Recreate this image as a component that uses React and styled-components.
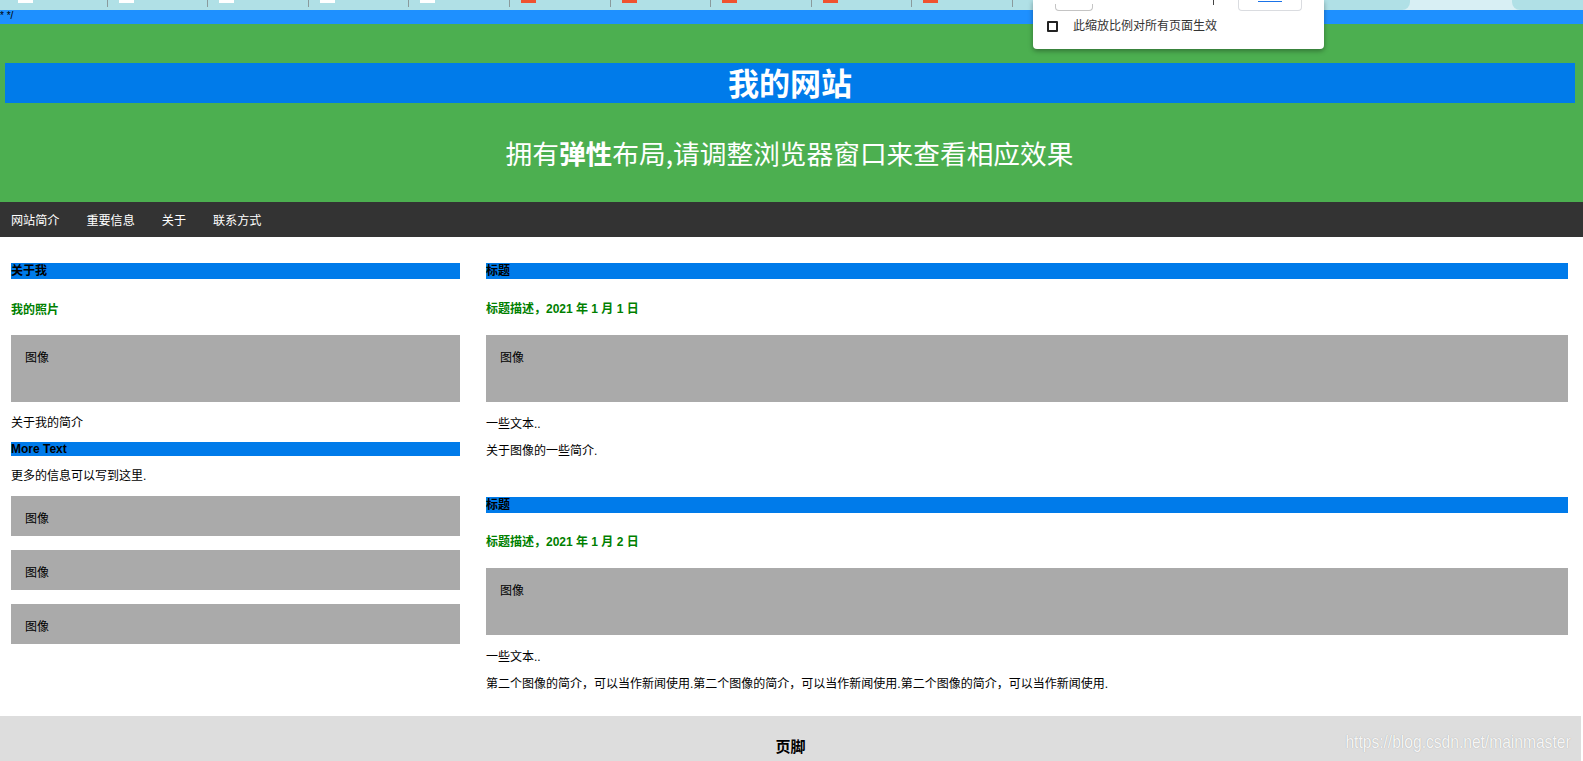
import React from "react"
import styled, { createGlobalStyle } from "styled-components"

const GlobalStyle = createGlobalStyle`
  html, body {
    margin: 0;
    padding: 0;
    overflow: hidden;
    background: #fff;
  }
  body {
    font-family: "Liberation Sans", "Noto Sans CJK SC", sans-serif;
    color: #000;
  }
  * {
    box-sizing: border-box;
  }
`

const Page = styled.div`
  position: relative;
  width: 100%;
`

/* browser chrome leftovers at the top */
const TabStrip = styled.div`
  display: flex;
  height: 10px;
  background: #d8eff4;
  overflow: hidden;
`

const TabGroup = styled.div`
  display: flex;
  flex: 0 0 1410px;
  padding-left: 7px;
  background: #b0e0e6;
  border-bottom-right-radius: 8px;
`

const TabGap = styled.div`
  flex: 0 0 102px;
`

const TabTail = styled.div`
  flex: 1;
  background: #b0e0e6;
  border-bottom-left-radius: 8px;
`

const Tab = styled.div`
  flex: 0 0 100.6px;
  border-right: 1px solid #8a9a9c;
  height: 7px;
`

const Favicon = styled.span`
  display: block;
  margin-left: 11px;
  width: 15px;
  height: 3px;
  background: ${p => (p.$red ? "#ef5230" : "#fff")};
`

const CommentStrip = styled.div`
  height: 14px;
  background: #1e90ff;
  font-size: 10px;
  line-height: 12px;
  color: #000;
`

const Header = styled.header`
  background: #4caf50;
  padding: 39px 0 33px;
  text-align: center;
  color: #fff;
`

const SiteTitle = styled.h1`
  margin: 0 8px 0 5px;
  height: 40px;
  line-height: 38px;
  background: #007bea;
  font-family: "Noto Sans CJK SC", sans-serif;
  font-size: 31px;
  font-weight: 700;
`

const Tagline = styled.p`
  margin: 34px 0 0;
  padding-right: 4px;
  font-size: 26.7px;
  line-height: 32px;
  font-family: "Noto Sans CJK SC", sans-serif;
  font-weight: 400;

  b {
    font-weight: 700;
  }
`

const NavBar = styled.nav`
  display: flex;
  height: 35px;
  background: #333;
`

const NavLink = styled.a`
  padding: 4px 14.5px 0 12.5px;
  color: #fff;
  font-size: 12.1px;
  line-height: 31px;
  text-decoration: none;
  &:first-child {
    padding-left: 11px;
  }
`

const Row = styled.div`
  display: grid;
  grid-template-columns: 472px 1fr;
`

const Column = styled.div`
  display: flex;
  flex-direction: column;
  padding: 12px ${p => (p.$main ? "15px" : "12px")} 25px ${p => (p.$main ? "14px" : "11px")};
`

const BlockTitle = styled.h2`
  margin: ${p => p.$mt}px 0 0;
  height: ${p => p.$h || 16}px;
  line-height: ${p => p.$h || 16}px;
  background: #007bea;
  font-size: 12px;
  font-weight: 700;
  color: #000;
`

const SubTitle = styled.h5`
  margin: ${p => p.$mt}px 0 0;
  padding-top: 2px;
  font-size: 12px;
  line-height: 14px;
  font-weight: 700;
  color: #008000;
`

const FakeImg = styled.div`
  margin-top: ${p => p.$mt}px;
  height: ${p => p.$h}px;
  padding: 16px 14px 12px;
  background: #aaa;
  font-size: 12px;
  line-height: 14px;
`

const Text = styled.p`
  margin: ${p => p.$mt}px 0 0;
  padding-top: 1px;
  font-size: 12px;
  line-height: 14px;
`

const Footer = styled.footer`
  position: relative;
  height: 60px;
  margin-right: 2px;
  padding-top: 22px;
  background: #ddd;
  text-align: center;
  font-size: 15px;
  line-height: 18px;
  font-weight: 700;
`

const Watermark = styled.span`
  position: absolute;
  right: 10px;
  top: 15px;
  font-size: 19px;
  line-height: 22px;
  font-weight: 400;
  color: rgba(255, 255, 255, 0.92);
  text-shadow: 0 0 1px rgba(0, 0, 0, 0.3);
  transform: scaleX(0.82);
  transform-origin: right center;
  white-space: nowrap;
`

/* zoom popup from the browser, lying over the page */
const ZoomPopup = styled.div`
  position: absolute;
  top: 0;
  left: 1033px;
  width: 291px;
  height: 49px;
  background: #fff;
  border-radius: 0 0 4px 4px;
  box-shadow: 0 2px 5px rgba(0, 0, 0, 0.35);
  overflow: hidden;
`

const PopupTop = styled.div`
  display: flex;
  align-items: flex-end;
  height: 11px;
`

const ZoomField = styled.div`
  margin-left: 22px;
  width: 38px;
  height: 7px;
  border: 1px solid #c4c4c4;
  border-top: none;
  border-radius: 0 0 4px 4px;
`

const PlusStem = styled.div`
  margin-left: 120px;
  margin-bottom: 6px;
  width: 1px;
  height: 5px;
  background: #444;
`

const ResetButton = styled.div`
  margin-left: 24px;
  width: 64px;
  height: 11px;
  border: 1px solid #dadce0;
  border-top: none;
  border-radius: 0 0 4px 4px;
  display: flex;
  justify-content: center;

  span {
    margin-top: 1px;
    width: 24px;
    height: 1px;
    background: #1a73e8;
  }
`

const CheckRow = styled.label`
  display: flex;
  align-items: center;
  margin: 8px 0 0 14px;
  font-size: 12px;
  line-height: 14px;
  color: #333;
`

const CheckBox = styled.span`
  width: 11px;
  height: 11px;
  border: 2px solid #222;
  border-radius: 1px;
  margin-right: 15px;
`

const tabs = [false, false, false, false, false, true, true, true, true, true]

export default function App() {
  return (
    <Page>
      <GlobalStyle />
      <TabStrip>
        <TabGroup>
          {tabs.map((red, i) => (
            <Tab key={i}>
              <Favicon $red={red} />
            </Tab>
          ))}
        </TabGroup>
        <TabGap />
        <TabTail />
      </TabStrip>
      <CommentStrip>* */</CommentStrip>

      <Header>
        <SiteTitle>我的网站</SiteTitle>
        <Tagline>
          拥有<b>弹性</b>布局,请调整浏览器窗口来查看相应效果
        </Tagline>
      </Header>

      <NavBar>
        <NavLink href="#">网站简介</NavLink>
        <NavLink href="#">重要信息</NavLink>
        <NavLink href="#">关于</NavLink>
        <NavLink href="#">联系方式</NavLink>
      </NavBar>

      <Row>
        <Column>
          <BlockTitle $mt={14}>关于我</BlockTitle>
          <SubTitle $mt={22}>我的照片</SubTitle>
          <FakeImg $mt={18} $h={67}>图像</FakeImg>
          <Text $mt={13}>关于我的简介</Text>
          <BlockTitle $mt={12} $h={14}>More Text</BlockTitle>
          <Text $mt={12}>更多的信息可以写到这里.</Text>
          <FakeImg $mt={13} $h={40}>图像</FakeImg>
          <FakeImg $mt={14} $h={40}>图像</FakeImg>
          <FakeImg $mt={14} $h={40}>图像</FakeImg>
        </Column>
        <Column $main>
          <BlockTitle $mt={14}>标题</BlockTitle>
          <SubTitle $mt={21}>标题描述，2021 年 1 月 1 日</SubTitle>
          <FakeImg $mt={19} $h={67}>图像</FakeImg>
          <Text $mt={14}>一些文本..</Text>
          <Text $mt={12}>关于图像的一些简介.</Text>
          <BlockTitle $mt={39}>标题</BlockTitle>
          <SubTitle $mt={20}>标题描述，2021 年 1 月 2 日</SubTitle>
          <FakeImg $mt={19} $h={67}>图像</FakeImg>
          <Text $mt={14}>一些文本..</Text>
          <Text $mt={12}>
            第二个图像的简介，可以当作新闻使用.第二个图像的简介，可以当作新闻使用.第二个图像的简介，可以当作新闻使用.
          </Text>
        </Column>
      </Row>

      <Footer>
        页脚
        <Watermark>https://blog.csdn.net/mainmaster</Watermark>
      </Footer>

      <ZoomPopup>
        <PopupTop>
          <ZoomField />
          <PlusStem />
          <ResetButton>
            <span />
          </ResetButton>
        </PopupTop>
        <CheckRow>
          <CheckBox />
          此缩放比例对所有页面生效
        </CheckRow>
      </ZoomPopup>
    </Page>
  )
}
